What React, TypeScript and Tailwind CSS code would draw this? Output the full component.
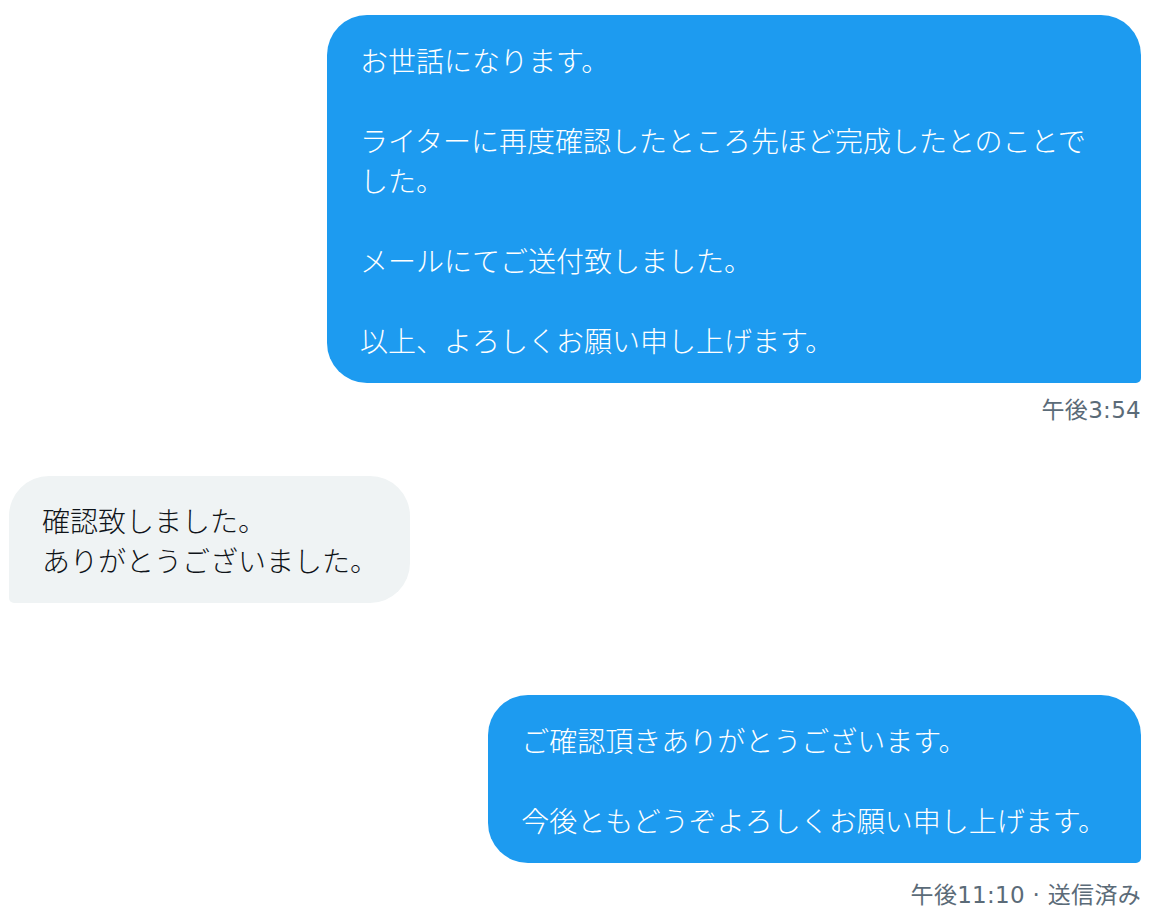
import React from "react";

type Msg = {
  side: "me" | "them";
  lines: string[];
  meta?: string;
};

const messages: Msg[] = [
  {
    side: "me",
    lines: [
      "お世話になります。",
      "",
      "ライターに再度確認したところ先ほど完成したとのことでした。",
      "",
      "メールにてご送付致しました。",
      "",
      "以上、よろしくお願い申し上げます。",
    ],
    meta: "午後3:54",
  },
  {
    side: "them",
    lines: ["確認致しました。", "ありがとうございました。"],
  },
  {
    side: "me",
    lines: [
      "ご確認頂きありがとうございます。",
      "",
      "今後ともどうぞよろしくお願い申し上げます。",
    ],
    meta: "午後11:10 · 送信済み",
  },
];

function Bubble({ msg }: { msg: Msg }) {
  const mine = msg.side === "me";
  return (
    <div
      className={
        mine
          ? "self-end max-w-[814px] rounded-[40px] rounded-br-[5px] bg-[#1d9bf0] text-white pl-[33px] pr-[35px] pt-[25px] pb-[23px]"
          : "self-start max-w-[814px] rounded-[40px] rounded-bl-[5px] bg-[#eff3f4] text-[#0f1419] pl-[33px] pr-[32px] pt-[24px] pb-[23px]"
      }
    >
      {msg.lines.map((line, i) => (
        <p key={i} className="text-[28px] font-light leading-[40px] min-h-[40px]">
          {line}
        </p>
      ))}
    </div>
  );
}

// 時刻表示は数字が幅広いので DejaVu を先に
const metaFont = {
  fontFamily: '"DejaVu Sans", "Noto Sans CJK JP", sans-serif',
};

export default function App() {
  return (
    <div
      className="min-h-screen bg-white flex flex-col pt-[15px] pl-[9px] pr-[16px]"
      style={{ fontFamily: '"Noto Sans CJK JP", "Noto Sans", sans-serif' }}
    >
      <Bubble msg={messages[0]} />
      <div
        className="self-end mt-[15px] text-[23px] leading-[24px] tracking-[0.3px] text-[#5b6b78]"
        style={metaFont}
      >
        {messages[0].meta}
      </div>

      <div className="mt-[54px] flex flex-col">
        <Bubble msg={messages[1]} />
      </div>

      <div className="mt-[92px] flex flex-col">
        <Bubble msg={messages[2]} />
      </div>
      <div
        className="self-end mt-[20px] text-[23px] leading-[24px] tracking-[0.3px] text-[#5b6b78]"
        style={metaFont}
      >
        {messages[2].meta}
      </div>
    </div>
  );
}
